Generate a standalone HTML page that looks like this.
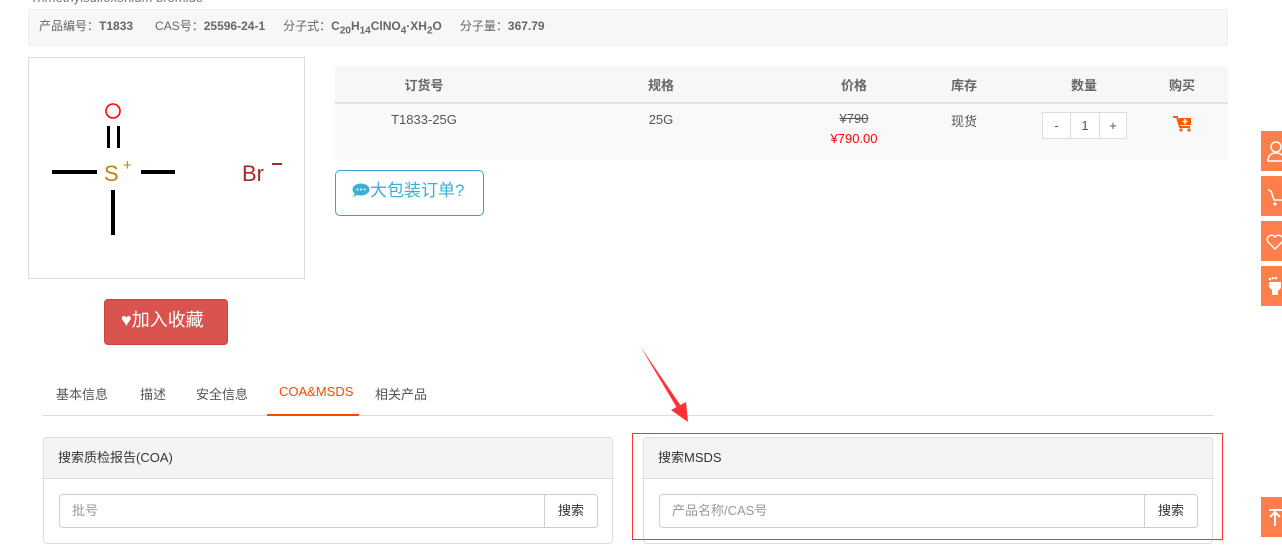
<!DOCTYPE html>
<html><head><meta charset="utf-8">
<style>
*{margin:0;padding:0;box-sizing:border-box}
body{width:1282px;height:556px;overflow:hidden;background:#fff;font-family:"Liberation Sans","Noto Sans CJK SC",sans-serif;color:#555;position:relative;font-size:13px}
.a{position:absolute}
.c{text-align:center}
.side{position:absolute;left:1261px;width:21px;height:40px;background:#ff7f4c}
</style></head><body>
<div class="a" style="left:30px;top:-10px;font-size:13px;color:#777">Trimethylsulfoxonium bromide</div>
<div class="a" style="left:28px;top:9px;width:1200px;height:37px;background:#f7f7f7;border:1px solid #eee;border-radius:3px;font-size:12px;color:#666;padding:7px 0 0 10px;white-space:nowrap">
产品编号：<b>T1833</b><span style="display:inline-block;width:22px"></span>CAS号：<b>25596-24-1</b><span style="display:inline-block;width:18px"></span>分子式：<b>C<sub style="font-size:10px">20</sub>H<sub style="font-size:10px">14</sub>ClNO<sub style="font-size:10px">4</sub>·XH<sub style="font-size:10px">2</sub>O</b><span style="display:inline-block;width:18px"></span>分子量：<b>367.79</b></div>

<div class="a" style="left:28px;top:57px;width:277px;height:222px;border:1px solid #ddd"></div>
<svg class="a" style="left:28px;top:57px" width="277" height="222">
<circle cx="85" cy="54" r="7" fill="none" stroke="#f00" stroke-width="1.6"/>
<rect x="79" y="69" width="3" height="22" fill="#000"/><rect x="89" y="69" width="3" height="22" fill="#000"/>
<rect x="24" y="113" width="45" height="4" fill="#000"/><rect x="113" y="113" width="34" height="4" fill="#000"/>
<rect x="83" y="133" width="4" height="45" fill="#000"/>
<text x="76" y="124" font-size="22" fill="#b8860b" font-family="Liberation Sans">S</text>
<text x="95" y="113" font-size="15" fill="#b8860b">+</text>
<text x="214" y="124" font-size="22" fill="#a52a2a" font-family="Liberation Sans">Br</text>
<rect x="244" y="106" width="10" height="2" fill="#a52a2a"/>
</svg>

<div class="a" style="left:335px;top:66px;width:893px;height:38px;background:#f7f7f7;border-bottom:2px solid #e2e2e2"></div>
<div class="a" style="left:335px;top:104px;width:893px;height:56px;background:#f9f9f9"></div>
<div class="a c" style="left:374px;top:75px;width:100px;font-weight:bold;color:#666">订货号</div>
<div class="a c" style="left:611px;top:75px;width:100px;font-weight:bold;color:#666">规格</div>
<div class="a c" style="left:804px;top:75px;width:100px;font-weight:bold;color:#666">价格</div>
<div class="a c" style="left:914px;top:75px;width:100px;font-weight:bold;color:#666">库存</div>
<div class="a c" style="left:1034px;top:75px;width:100px;font-weight:bold;color:#666">数量</div>
<div class="a c" style="left:1132px;top:75px;width:100px;font-weight:bold;color:#666">购买</div>
<div class="a c" style="left:374px;top:112px;width:100px">T1833-25G</div>
<div class="a c" style="left:611px;top:112px;width:100px">25G</div>
<div class="a c" style="left:804px;top:111px;width:100px;text-decoration:line-through">¥790</div>
<div class="a c" style="left:804px;top:131px;width:100px;color:#f00">¥790.00</div>
<div class="a c" style="left:914px;top:111px;width:100px">现货</div>
<div class="a" style="left:1042px;top:112px;width:85px;height:27px;border:1px solid #ddd;background:#fff;display:flex">
<div class="c" style="width:28px;border-right:1px solid #ddd;line-height:25px">-</div>
<div class="c" style="width:29px;border-right:1px solid #ddd;line-height:25px">1</div>
<div class="c" style="flex:1;line-height:25px">+</div></div>
<svg class="a" style="left:1172px;top:115px" width="22" height="18"><path d="M1 2h4l3 10h10" stroke="#ff5a00" stroke-width="2" fill="none"/><rect x="7" y="3" width="12" height="7" fill="#ff5a00"/><path d="M13 4v5M10.5 6.5h5" stroke="#fff" stroke-width="1.5"/><circle cx="9" cy="15" r="1.6" fill="#ff5a00"/><circle cx="17" cy="15" r="1.6" fill="#ff5a00"/></svg>

<div class="a" style="left:335px;top:170px;width:149px;height:46px;border:1px solid #31a4d0;border-radius:5px;color:#3ab0d6;font-size:17px;line-height:40px;padding-left:16px">
<svg width="18" height="14" style="vertical-align:-1px"><ellipse cx="9" cy="6.5" rx="8.5" ry="6" fill="#3ab0d6"/><path d="M3 10l-2 4 6-3z" fill="#3ab0d6"/><circle cx="5.5" cy="6.5" r="1" fill="#fff"/><circle cx="9" cy="6.5" r="1" fill="#fff"/><circle cx="12.5" cy="6.5" r="1" fill="#fff"/></svg>大包装订单?</div>

<div class="a" style="left:104px;top:299px;width:124px;height:46px;background:#d9534f;border:1px solid #d43f3a;border-radius:4px;color:#fff;font-size:18px;line-height:40px;padding-left:16px">♥加入收藏</div>

<div class="a" style="left:42px;top:415px;width:1171px;height:1px;background:#ddd"></div>
<div class="a" style="left:56px;top:384px;color:#555">基本信息</div>
<div class="a" style="left:140px;top:384px;color:#555">描述</div>
<div class="a" style="left:196px;top:384px;color:#555">安全信息</div>
<div class="a" style="left:279px;top:384px;color:#ff4a00">COA&amp;MSDS</div>
<div class="a" style="left:267px;top:414px;width:92px;height:2px;background:#ff4a00"></div>
<div class="a" style="left:375px;top:384px;color:#555">相关产品</div>

<div class="a" style="left:43px;top:437px;width:570px;height:107px;border:1px solid #ddd;border-radius:4px;overflow:hidden">
<div style="height:41px;background:#f4f4f4;border-bottom:1px solid #ddd;padding:9px 0 0 14px;color:#333">搜索质检报告(COA)</div>
<div style="position:absolute;left:15px;top:56px;width:539px;height:34px;border:1px solid #ccc;border-radius:4px;display:flex">
<div style="flex:1;color:#999;padding:5px 0 0 12px">批号</div><div style="width:53px;border-left:1px solid #ccc;color:#333;padding-top:5px;text-align:center">搜索</div></div></div>

<div class="a" style="left:643px;top:437px;width:570px;height:107px;border:1px solid #ddd;border-radius:4px;overflow:hidden">
<div style="height:41px;background:#f4f4f4;border-bottom:1px solid #ddd;padding:9px 0 0 14px;color:#333">搜索MSDS</div>
<div style="position:absolute;left:15px;top:56px;width:539px;height:34px;border:1px solid #ccc;border-radius:4px;display:flex">
<div style="flex:1;color:#999;padding:5px 0 0 12px">产品名称/CAS号</div><div style="width:53px;border-left:1px solid #ccc;color:#333;padding-top:5px;text-align:center">搜索</div></div></div>
<div class="a" style="left:632px;top:433px;width:591px;height:107px;border:1px solid #f33"></div>
<svg class="a" style="left:630px;top:340px" width="70" height="90"><path d="M10 6L47 68 51 66z" fill="#f33"/><path d="M41 70L58 82 56 62z" fill="#f33"/></svg>

<div class="side" style="top:131px"><svg width="21" height="40"><circle cx="15" cy="16" r="5" fill="none" stroke="#fff" stroke-width="1.5"/><path d="M7 30c0-6 4-8 8-8s8 2 8 8z" fill="none" stroke="#fff" stroke-width="1.5"/></svg></div>
<div class="side" style="top:176px"><svg width="21" height="40"><path d="M7 14l3 1 3 9h9" fill="none" stroke="#fff" stroke-width="1.5"/><circle cx="14" cy="28" r="1.6" fill="#fff"/></svg></div>
<div class="side" style="top:221px"><svg width="21" height="40"><path d="M14 28l-7-7a4 4 0 017-5 4 4 0 017 5z" fill="none" stroke="#fff" stroke-width="1.5"/></svg></div>
<div class="side" style="top:266px"><svg width="21" height="40"><circle cx="9" cy="13" r="1.3" fill="#fff"/><circle cx="12" cy="12" r="1.3" fill="#fff"/><circle cx="15" cy="12" r="1.3" fill="#fff"/><path d="M8 16h12v6l-3 3v4h-6v-5l-3-3z" fill="#fff"/></svg></div>
<div class="side" style="top:497px"><svg width="21" height="40"><path d="M8 13h13M14 14v15M9 20l5-5 5 5" fill="none" stroke="#fff" stroke-width="2"/></svg></div>
</body></html>
